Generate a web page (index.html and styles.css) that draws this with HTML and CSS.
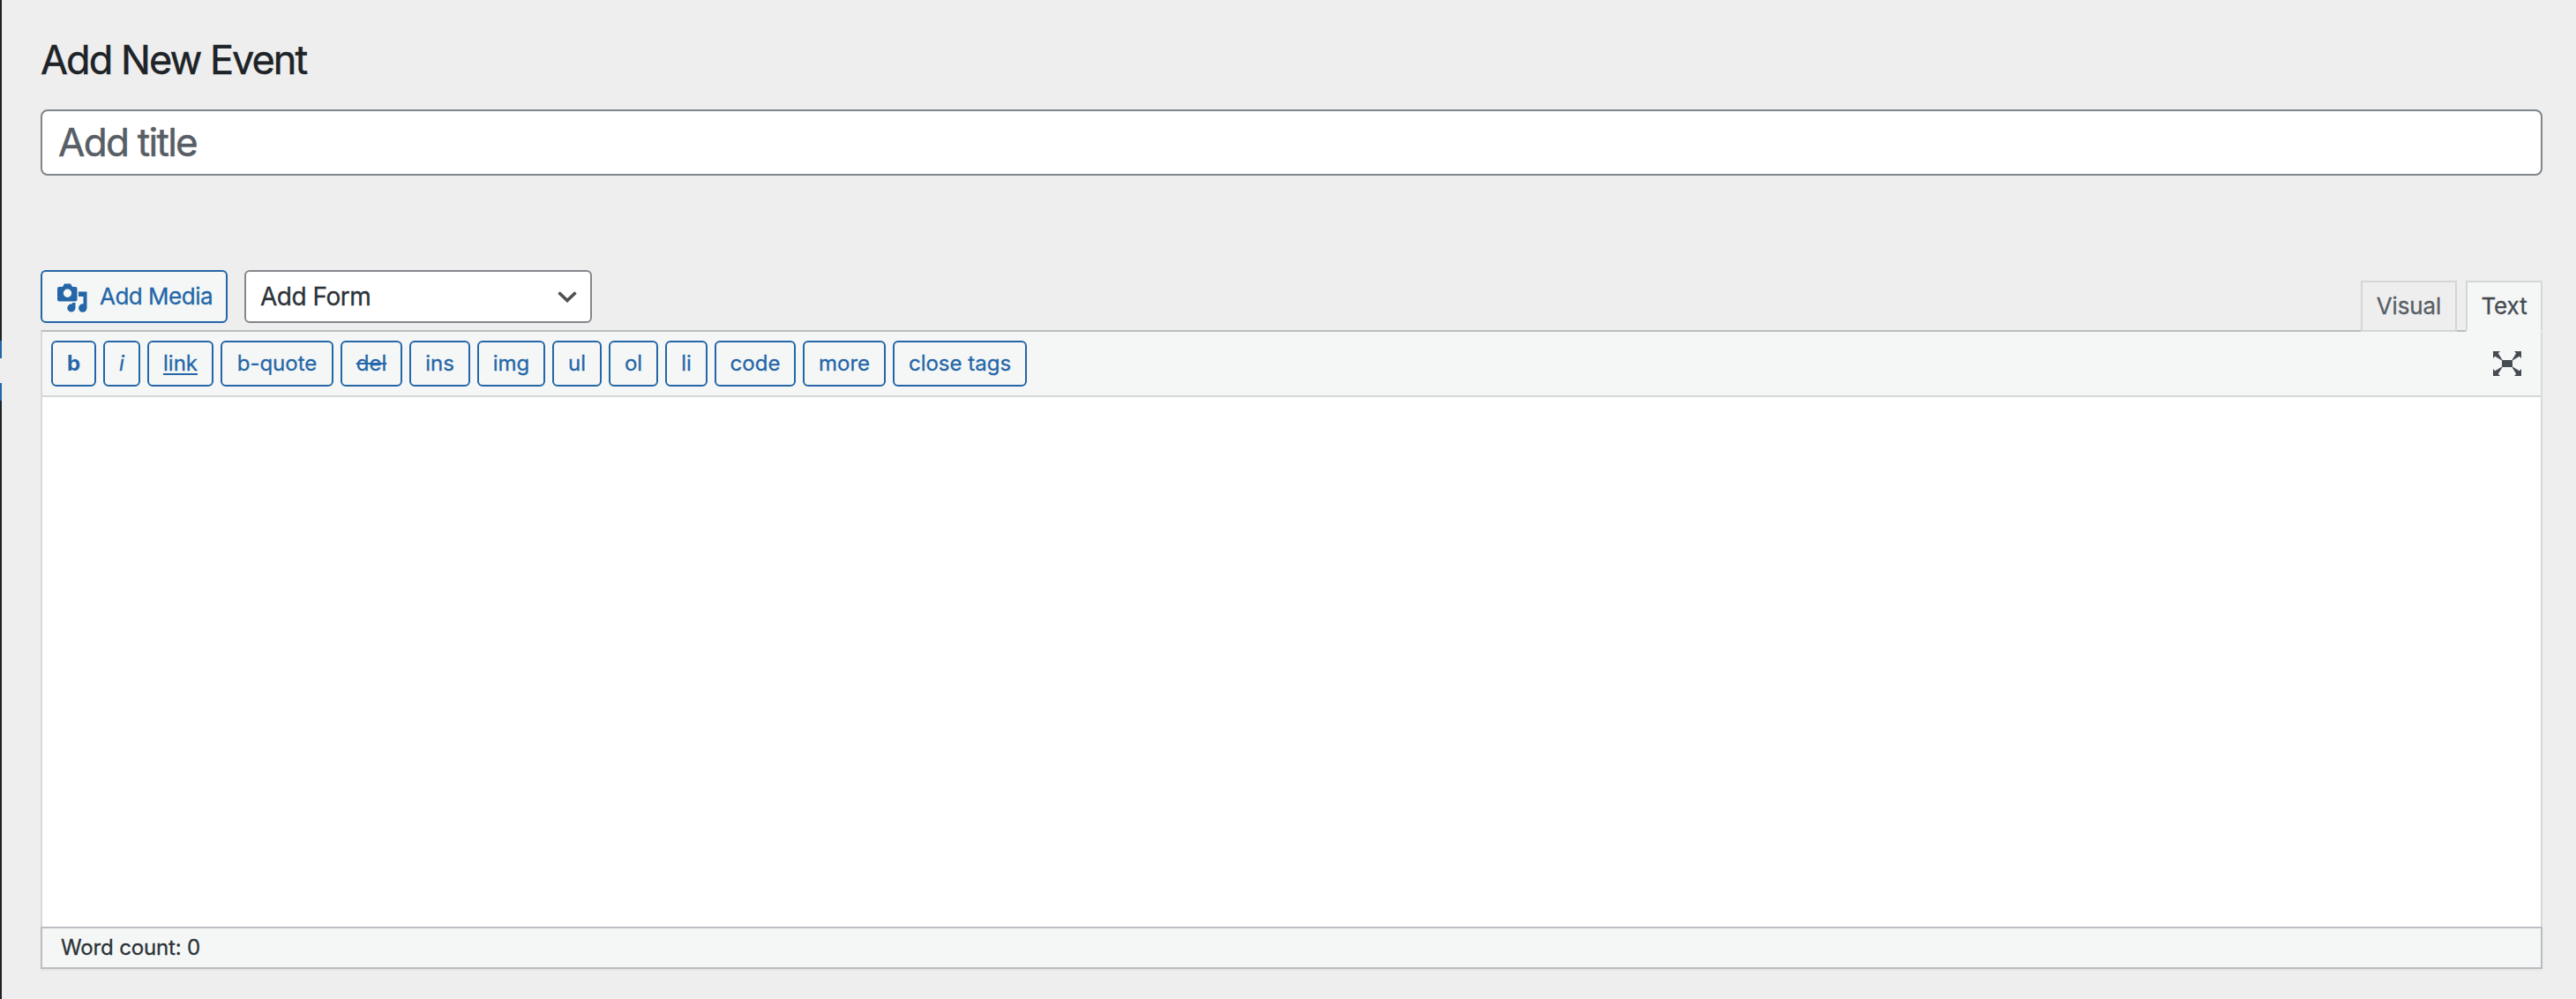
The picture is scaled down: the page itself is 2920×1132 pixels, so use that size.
FILE: index.html
```html
<!DOCTYPE html>
<html lang="en">
<head>
<meta charset="utf-8">
<title>Add New Event</title>
<link rel="stylesheet" href="styles.css">
</head>
<body>
<div class="admin">
  <aside class="menu-edge"><span class="menu-current"></span><span class="menu-arrow"></span><span class="menu-current"></span></aside>
  <main class="content">
    <h1 class="page-title">Add New Event</h1>
    <div class="title-field"><span>Add title</span></div>
    <div class="editor-tools">
      <div class="media-buttons">
        <button class="add-media">
          <svg class="media-icon" viewBox="0 0 34 34" aria-hidden="true"><path fill-rule="evenodd" d="M2 4h4l2-3.500h7l2 3.500h3.500a2 2 0 0 1 2 2v12.500a2 2 0 0 1-2 2H2a2 2 0 0 1-2-2V6a2 2 0 0 1 2-2zM11.500 6.500a4.700 4.700 0 1 0 0 9.400a4.700 4.700 0 0 0 0-9.400z"/><path d="M24 9.500h9.500v18.500a4.700 4.700 0 1 1-4-4.600V15H24z"/><path d="M17 22h3.500v6a4.600 4.600 0 1 1-3.500-4.500z"/></svg>
          <span>Add Media</span>
        </button>
        <div class="form-select"><span>Add Form</span>
          <svg class="chevron" viewBox="0 0 22 13" aria-hidden="true"><path d="M1.500 1.500L11 10.500L20.500 1.500"/></svg>
        </div>
      </div>
      <div class="tabs">
        <button class="tab">Visual</button>
        <button class="tab tab-active">Text</button>
      </div>
    </div>
    <section class="editor">
      <div class="quicktags">
        <button class="qt qt-b">b</button>
        <button class="qt qt-i">i</button>
        <button class="qt qt-link">link</button>
        <button class="qt qt-quote">b-quote</button>
        <button class="qt qt-del">del</button>
        <button class="qt qt-ins">ins</button>
        <button class="qt qt-img">img</button>
        <button class="qt qt-ul">ul</button>
        <button class="qt qt-ol">ol</button>
        <button class="qt qt-li">li</button>
        <button class="qt qt-code">code</button>
        <button class="qt qt-more">more</button>
        <button class="qt qt-close">close tags</button>
        <svg class="fullscreen" viewBox="0 0 32 28" aria-hidden="true"><path d="M0 0h8L5.800 2.200L10.600 10L10 10.600L2.200 5.800L0 8zM32 0h-8l2.200 2.200L21.400 10l.6.6L29.800 5.800L32 8zM0 28h8l-2.200-2.200L10.600 18l-.6-.6L2.200 22.200L0 20zM32 28h-8l2.200-2.200L21.400 18l.6-.6L29.800 22.200L32 20zM10 10h12v8H10z"/></svg>
      </div>
      <div class="editor-area"></div>
    </section>
    <footer class="status">Word count: 0</footer>
  </main>
</div>
</body>
</html>
```
FILE: styles.css
```css
* { box-sizing: border-box; }
body { margin: 0; background: #eee; color: #2c3338; font-family: Inter, sans-serif; font-weight: 400; -webkit-text-stroke: .3px currentColor; }
button { appearance: none; margin: 0; padding: 0; font: inherit; }
.admin { display: flex; height: 1132px; }
.menu-edge { width: 2px; flex: none; padding-top: 386px; background: #1d2327; display: flex; flex-direction: column; }
.menu-current { height: 20px; background: #2466a8; }
.menu-arrow { height: 28px; background: #eee; }
.content { flex: 1; padding: 40px 38px 0 44px; }
.page-title { margin: 0; height: 56px; font-size: 45px; line-height: 55px; font-weight: 400; letter-spacing: -1.95px; color: #1d2327; -webkit-text-stroke-width: .5px; }
.title-field { display: flex; align-items: center; height: 75px; margin-top: 28px; padding: 0 18px 1px; border: 2px solid #7f858a; border-radius: 8px; background: #fff; color: #585e66; font-size: 44px; letter-spacing: -1.7px; -webkit-text-stroke-width: .5px; }
.editor-tools { display: flex; justify-content: space-between; align-items: flex-end; height: 70px; margin-top: 107px; margin-bottom: -2px; position: relative; }
.media-buttons { display: flex; gap: 19px; align-self: flex-start; }
.add-media { display: flex; align-items: center; width: 212px; height: 60px; padding: 0 0 1px 17px; gap: 14px; border: 2px solid #2466a8; border-radius: 6px; background: #f5f7f6; color: #2466a8; font-size: 26px; letter-spacing: -.5px; }
.media-icon { width: 34px; height: 34px; margin-top: 5px; fill: #2466a8; }
.form-select { display: flex; align-items: center; justify-content: space-between; width: 394px; height: 60px; padding: 0 15px 0 16px; border: 2px solid #85868b; border-radius: 6px; background: #fff; font-size: 28px; letter-spacing: -.5px; }
.chevron { width: 22px; height: 13px; fill: none; stroke: #50504f; stroke-width: 3.6; }
.tabs { display: flex; gap: 10px; }
.tab { height: 58px; border: 2px solid #d5d6d6; background: #eee; color: #585e66; font-size: 26px; padding-bottom: 2px; letter-spacing: -.1px; }
.tab:first-child { width: 109px; }
.tab-active { width: 87px; border-bottom-color: #f5f7f6; background: #f5f7f6; color: #464c52; }
.editor { border: 2px solid #d7d9da; border-top-color: #bcbdc2; border-bottom: 0; background: #fff; }
.quicktags { display: flex; align-items: center; gap: 8px; height: 74px; padding: 0 22px 0 10px; background: #f5f7f6; border-bottom: 2px solid #d5d6d6; }
.qt { height: 52px; padding-bottom: 2px; border: 2px solid #2466a8; border-radius: 6px; background: #f5f7f6; color: #2466a8; font-size: 24px; }
.qt-b { width: 51px; font-weight: 700; -webkit-text-stroke-width: 0; }
.qt-i { width: 42px; font-style: italic; }
.qt-link { width: 75px; text-decoration: underline; text-decoration-thickness: 2px; text-underline-offset: 3px; }
.qt-quote { width: 128px; }
.qt-del { width: 70px; text-decoration: line-through; }
.qt-ins { width: 69px; }
.qt-img { width: 77px; }
.qt-ul, .qt-ol { width: 56px; }
.qt-li { width: 48px; }
.qt-code { width: 92px; }
.qt-more { width: 94px; }
.qt-close { width: 152px; }
.fullscreen { width: 32px; height: 28px; margin-left: auto; fill: #464c52; }
.editor-area { height: 600px; }
.status { height: 48px; padding-left: 21px; border: 2px solid #bcbdc2; background: #f5f7f6; box-shadow: 0 2px 2px rgba(0,0,0,.04); font-size: 24px; line-height: 44px; letter-spacing: -.15px; }
```
